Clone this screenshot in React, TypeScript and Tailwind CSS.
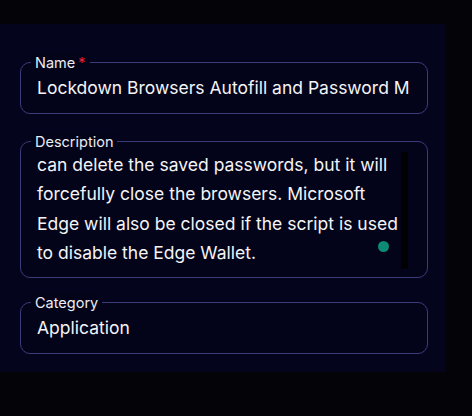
import React from "react";

const font = { fontFamily: "Inter, 'Noto Sans', sans-serif" };

const Field = ({
  label,
  required,
  className,
  children,
}: {
  label: string;
  required?: boolean;
  className?: string;
  children: React.ReactNode;
}) => {
  return (
    <div
      className={`relative w-[408px] rounded-[10px] border border-[#3a3c78] bg-[#03031a] ${className ?? ""}`}
    >
      <div className="absolute -top-[9px] left-[10px] flex items-center bg-[#03031a] px-1 text-[14.5px] leading-[17px] text-[#ececf2]">
        {label}
        {required ? <span className="ml-[3px] text-[#e0243a]">*</span> : null}
      </div>
      {children}
    </div>
  );
};

export default function App() {
  return (
    <div className="h-[416px] w-[472px] overflow-hidden bg-[#030308] pt-6" style={font}>
      <div className="w-[445px] bg-[#04041c] pb-[18px] pl-5 pt-[38px]">
        <Field label="Name" required className="h-[52px]">
          <div className="flex h-full items-center overflow-hidden whitespace-nowrap pl-4 text-[17.5px] text-[#f4f4f6]">
            Lockdown Browsers Autofill and Password M
          </div>
        </Field>

        <Field label="Description" className="mt-[27px] h-[137px]">
          <div className="flex h-full">
            <div className="flex-1 pl-4 pt-[8px] text-[17.5px] leading-[29.4px] text-[#f4f4f6]">
              <div>can delete the saved passwords, but it will</div>
              <div>forcefully close the browsers. Microsoft</div>
              <div className="whitespace-nowrap">Edge will also be closed if the script is used</div>
              <div className="flex items-center">
                <span>to disable the Edge Wallet.</span>
                <span className="ml-auto mr-[12px] mt-[-12px] h-[11px] w-[11px] rounded-full bg-[#0e8b73]" />
              </div>
            </div>
            <div className="mr-[19px] mt-[10px] h-[117px] w-[7px] shrink-0 bg-[#010104]" />
          </div>
        </Field>

        <Field label="Category" className="mt-[24px] h-[52px]">
          <div className="flex h-full items-center pl-4 text-[17.5px] text-[#f4f4f6]">
            Application
          </div>
        </Field>
      </div>
    </div>
  );
}
